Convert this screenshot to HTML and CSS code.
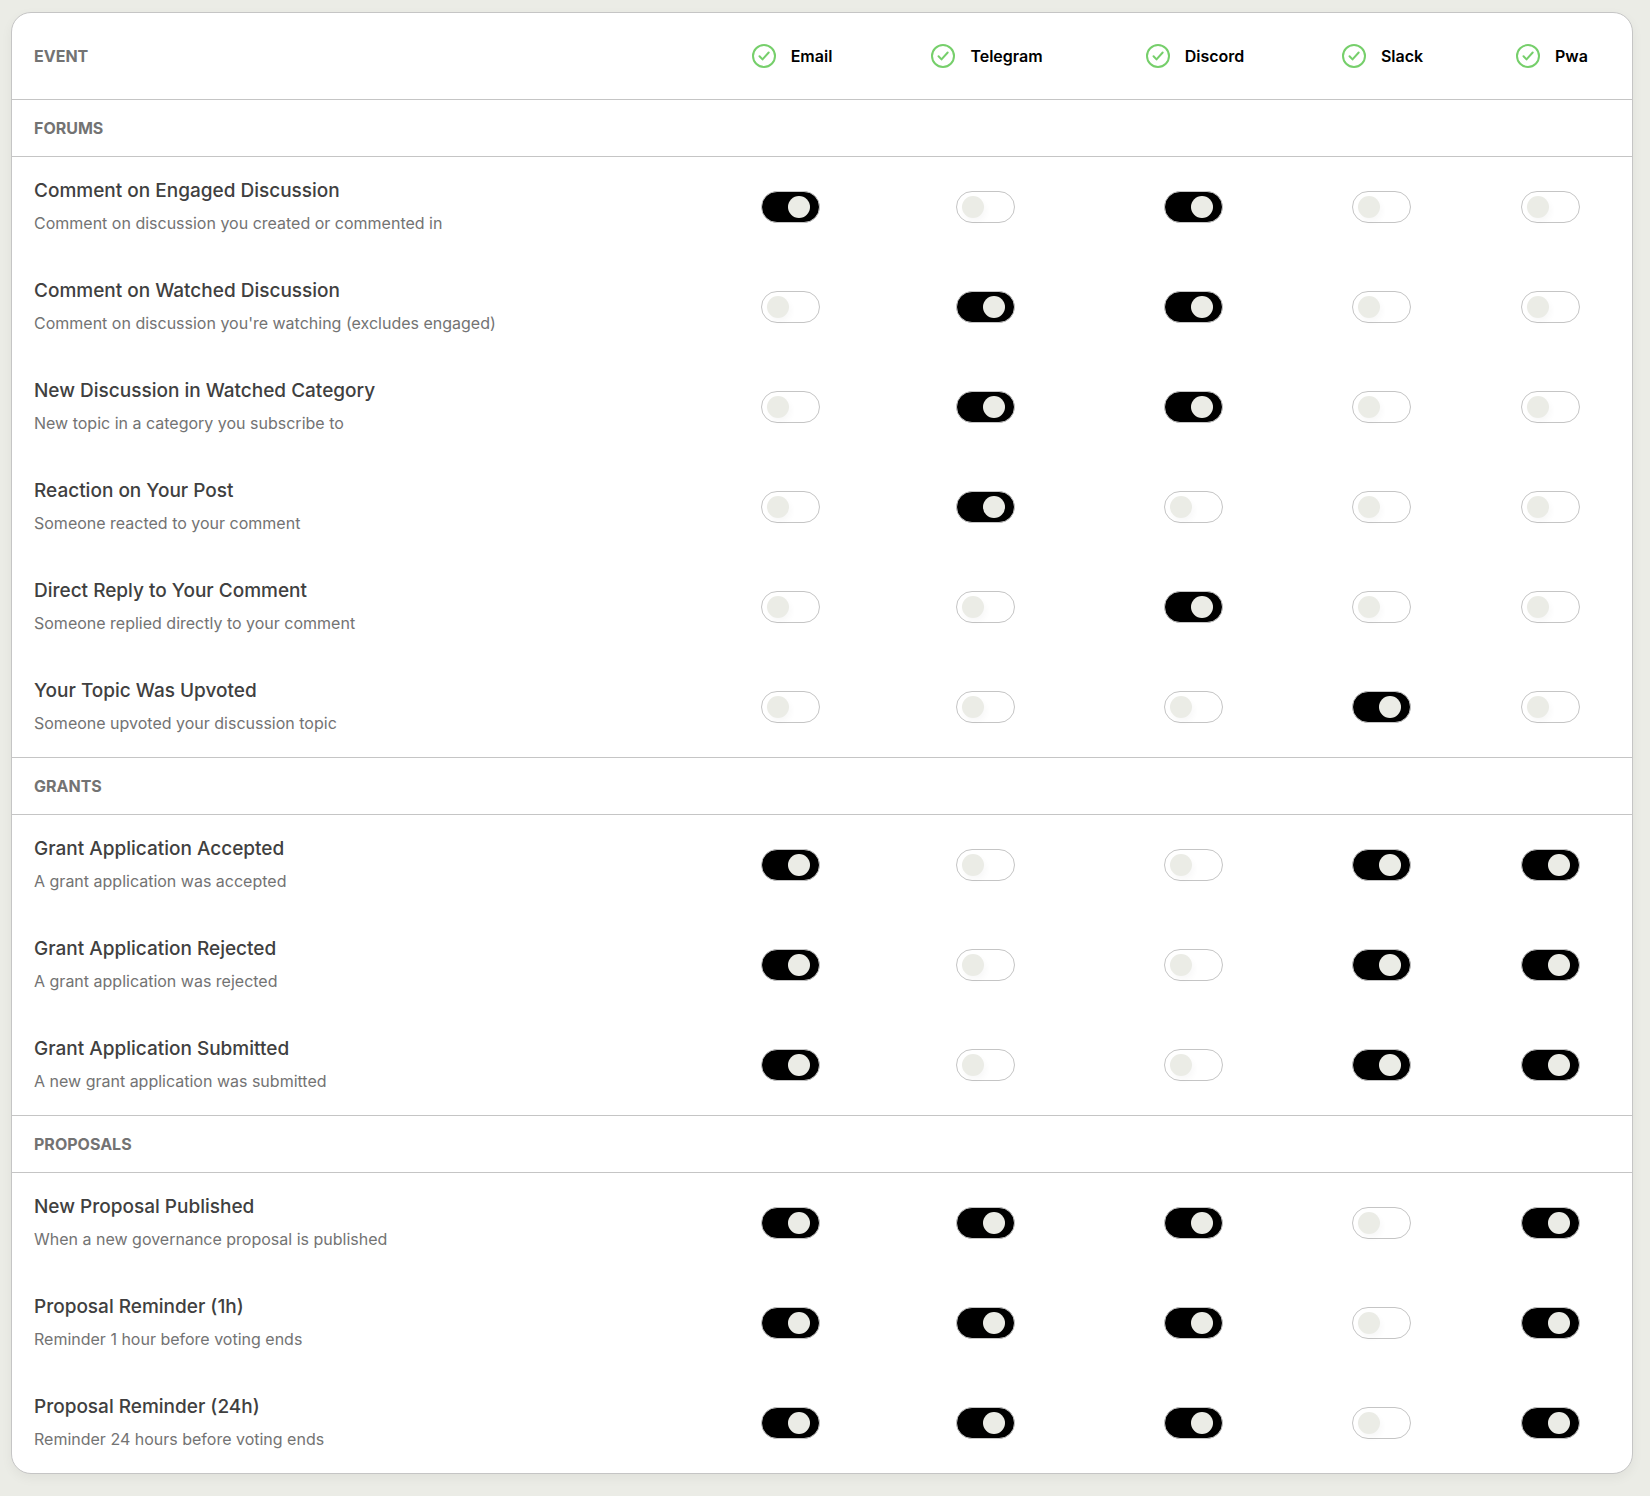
FILE: index.html
```
<!DOCTYPE html>
<html lang="en">
<head>
<meta charset="utf-8">
<title>Notification settings</title>
<link rel="stylesheet" href="styles.css">
</head>
<body>
<svg class="sprite" aria-hidden="true">
  <symbol id="check" viewBox="0 0 28 28">
    <circle cx="14" cy="14" r="11"/>
    <path d="M9.5 14.2 12.5 17.4 18.7 10.5"/>
  </symbol>
</svg>
<main class="card">
  <table class="events">
    <colgroup>
      <col><col class="col-email"><col class="col-telegram"><col class="col-discord"><col class="col-slack"><col class="col-pwa">
    </colgroup>
    <thead>
      <tr>
        <th scope="col" class="label">EVENT</th>
        <th scope="col"><span class="channel"><svg class="check"><use href="#check"/></svg>Email</span></th>
        <th scope="col"><span class="channel"><svg class="check"><use href="#check"/></svg>Telegram</span></th>
        <th scope="col"><span class="channel"><svg class="check"><use href="#check"/></svg>Discord</span></th>
        <th scope="col"><span class="channel"><svg class="check"><use href="#check"/></svg>Slack</span></th>
        <th scope="col"><span class="channel"><svg class="check"><use href="#check"/></svg>Pwa</span></th>
      </tr>
    </thead>
  </table>
</main>
<script src="events.js"></script>
</body>
</html>
```
FILE: styles.css
```
*, *::before { box-sizing: border-box; }

body {
  margin: 0;
  padding: 12px 17px 22px 11px;
  background: #ebece6;
  color: #000;
  font-family: Inter, "Liberation Sans", sans-serif;
  font-size: 16px;
  line-height: 24px;
}

.sprite { position: absolute; width: 0; height: 0; }

.card {
  overflow: hidden;
  border: 1px solid #c5c5c5;
  border-radius: 20px;
  background: #fff;
  box-shadow: 0 4px 12px rgba(0, 0, 0, 0.05);
}

.events {
  width: 100%;
  table-layout: fixed;
  border-collapse: separate;
  border-spacing: 0;
}

.col-email { width: 173px; }
.col-telegram { width: 217px; }
.col-discord { width: 199px; }
.col-slack { width: 176px; }
.col-pwa { width: 163px; }

th, td { padding: 0; text-align: center; }
thead th { height: 86px; font-weight: 600; }

.label {
  padding-left: 22px;
  color: #737373;
  text-align: left;
}

thead .label, .group .label { font-weight: 700; }

.group .label {
  height: 58px;
  border-top: 1px solid #c5c5c5;
  border-bottom: 1px solid #c5c5c5;
}

.channel { display: flex; align-items: center; justify-content: center; gap: 13px; padding-left: 1px; }

.check {
  width: 28px;
  height: 28px;
  fill: none;
  stroke: #76cf6b;
  stroke-width: 2;
  stroke-linecap: round;
  stroke-linejoin: round;
}

.event { height: 100px; padding-left: 22px; font-weight: 400; text-align: left; }

.title {
  display: block;
  color: #404040;
  font-size: 19px;
  font-weight: 500;
  line-height: 28px;
}

.detail { display: block; margin-top: 4px; color: #737373; line-height: 28px; }

.toggle {
  appearance: none;
  display: block;
  width: 59px;
  height: 32px;
  margin: 0 auto;
  padding: 4px 5px;
  border: 1px solid #c5c5c5;
  border-radius: 16px;
  background: #fff;
  cursor: pointer;
}

.toggle::before {
  content: "";
  display: block;
  width: 22px;
  height: 22px;
  border-radius: 50%;
  background: #ebece6;
  box-shadow: 2px 4px 6px rgba(0, 0, 0, 0.03);
}

.toggle:checked { background: #000; }
.toggle:checked::before { margin-left: 21px; }
```
FILE: events.js
```
const channels = ["Email", "Telegram", "Discord", "Slack", "Pwa"];

// The last field of each event holds one digit per channel: 1 is on, 0 is off.
const groups = [
  ["FORUMS", [
    ["Comment on Engaged Discussion", "Comment on discussion you created or commented in", "10100"],
    ["Comment on Watched Discussion", "Comment on discussion you're watching (excludes engaged)", "01100"],
    ["New Discussion in Watched Category", "New topic in a category you subscribe to", "01100"],
    ["Reaction on Your Post", "Someone reacted to your comment", "01000"],
    ["Direct Reply to Your Comment", "Someone replied directly to your comment", "00100"],
    ["Your Topic Was Upvoted", "Someone upvoted your discussion topic", "00010"]
  ]],
  ["GRANTS", [
    ["Grant Application Accepted", "A grant application was accepted", "10011"],
    ["Grant Application Rejected", "A grant application was rejected", "10011"],
    ["Grant Application Submitted", "A new grant application was submitted", "10011"]
  ]],
  ["PROPOSALS", [
    ["New Proposal Published", "When a new governance proposal is published", "11101"],
    ["Proposal Reminder (1h)", "Reminder 1 hour before voting ends", "11101"],
    ["Proposal Reminder (24h)", "Reminder 24 hours before voting ends", "11101"]
  ]]
];

const row = ([title, detail, state]) => `
  <tr>
    <th scope="row" class="event"><span class="title">${title}</span><span class="detail">${detail}</span></th>
    ${channels.map((name, i) => `<td><input type="checkbox" role="switch" class="toggle" aria-label="${title}: ${name}"${state[i] === "1" ? " checked" : ""}></td>`).join("")}
  </tr>`;

document.querySelector(".events").insertAdjacentHTML("beforeend", groups.map(([name, events]) => `
  <tbody>
    <tr class="group"><th colspan="6" scope="rowgroup" class="label">${name}</th></tr>
    ${events.map(row).join("")}
  </tbody>`).join(""));
```
